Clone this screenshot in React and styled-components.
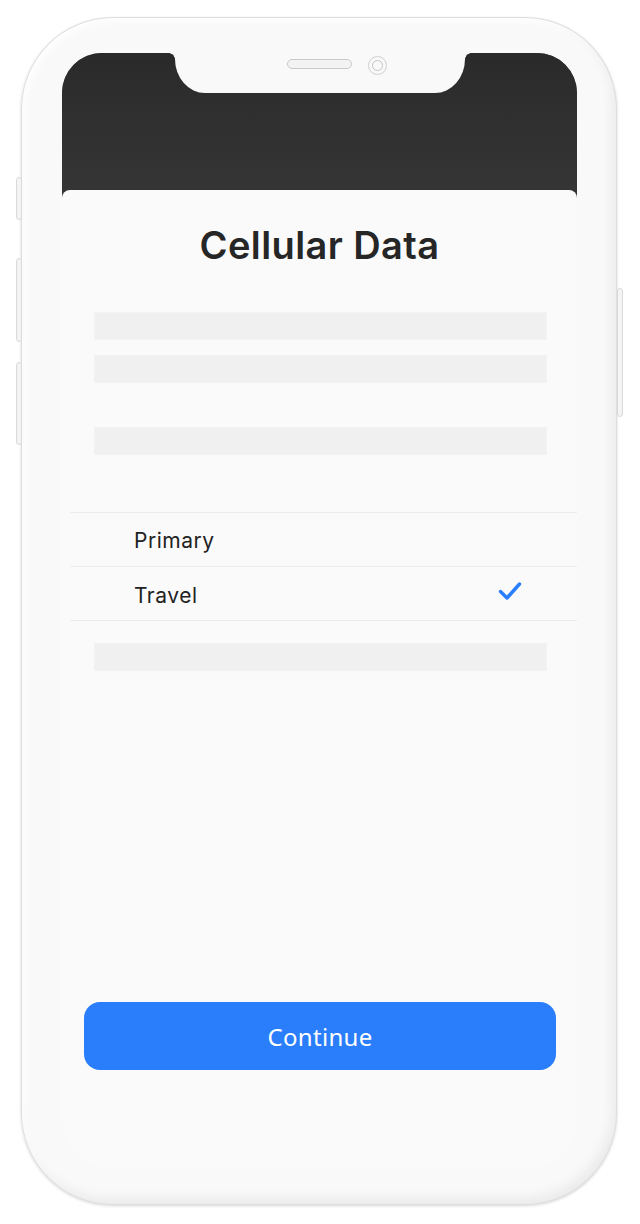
import React from "react";
import styled, { createGlobalStyle } from "styled-components";

const GlobalStyle = createGlobalStyle`
  html, body { margin: 0; padding: 0; background: #ffffff; }
  body { font-family: Inter, "Noto Sans", sans-serif; }
  * { box-sizing: border-box; }
`;

const Stage = styled.div`
  padding: 17px 0 0 21px;
  width: 640px;
  height: 1224px;
`;

const Phone = styled.div`
  position: relative;
  width: 596px;
  height: 1188px;
  border-radius: 92px;
  background: #f9f9f9;
  box-shadow: 0 1px 3px rgba(0, 0, 0, 0.16), inset 0 0 0 1px #dedede,
    inset -5px -7px 12px rgba(0, 0, 0, 0.06), inset 4px 4px 8px rgba(255, 255, 255, 0.9);
  padding: 36px 40px 37px 41px;
  display: flex;
  flex-direction: column;
`;

const SideButton = styled.div`
  position: absolute;
  width: 6px;
  top: ${(p) => p.$top}px;
  height: ${(p) => p.$h}px;
  ${(p) => (p.$right ? "right: -6px;" : "left: -5px;")}
  border: 1px solid #dadada;
  background: #f4f4f4;
  border-radius: 3px;
`;

const Screen = styled.div`
  flex: 1;
  display: flex;
  flex-direction: column;
  border-radius: 40px 40px 52px 52px;
  overflow: hidden;
  background: linear-gradient(#333333 0, #333333 200px, #fafafa 200px);
`;

const Header = styled.div`
  height: 137px;
  flex-shrink: 0;
  background: linear-gradient(#2a2a2a, #353535);
  display: flex;
  justify-content: center;
  align-items: flex-start;
`;

const Notch = styled.div`
  position: relative;
  width: 290px;
  height: 40px;
  background: #f9f9f9;
  border-radius: 0 0 30px 30px / 0 0 34px 34px;
  display: flex;
  justify-content: center;
  align-items: center;
  gap: 16px;
  padding-bottom: 18px;

  &::before,
  &::after {
    content: "";
    position: absolute;
    top: 0;
    width: 6px;
    height: 6px;
  }
  &::before {
    left: -6px;
    background: radial-gradient(circle at 0 100%, transparent 5.5px, #f9f9f9 6px);
  }
  &::after {
    right: -6px;
    background: radial-gradient(circle at 100% 100%, transparent 5.5px, #f9f9f9 6px);
  }
`;

const Spacer = styled.div`
  width: 19px;
`;

const Speaker = styled.div`
  width: 65px;
  height: 10px;
  border-radius: 5px;
  border: 1.5px solid #c9c9c9;
  background: #f3f3f3;
`;

const Camera = styled.div`
  width: 19px;
  height: 19px;
  border-radius: 50%;
  border: 1.5px solid #cfcfcf;
  display: flex;
  align-items: center;
  justify-content: center;
  margin-top: 2px;

  &::after {
    content: "";
    width: 9px;
    height: 9px;
    border-radius: 50%;
    border: 1.5px solid #c4c4c4;
  }
`;

const Card = styled.div`
  flex: 1;
  display: flex;
  flex-direction: column;
  background: #fafafa;
  border-radius: 8px 8px 0 0;
  padding-top: 33px;
`;

const Title = styled.h1`
  margin: 0;
  text-align: center;
  font-family: Inter, "Noto Sans", sans-serif;
  font-size: 38px;
  line-height: 44px;
  font-weight: 600;
  letter-spacing: 0.4px;
  color: #262626;
`;

const Bar = styled.div`
  height: 26px;
  margin: ${(p) => p.$mt}px 31px 0 33px;
  background: #f0f0f0;
  box-shadow: 0 0 0 1px #f3f3f3;
`;

const List = styled.div`
  margin: 58px 0 0 8px;
  border-top: 1px solid #ececec;
`;

const Row = styled.div`
  height: 54px;
  border-bottom: 1px solid #ececec;
  display: flex;
  align-items: center;
  justify-content: space-between;
  padding: ${(p) => (p.$last ? "4px" : "2px")} 55px 0 64px;
`;

const RowLabel = styled.span`
  font-family: Inter, "Noto Sans", sans-serif;
  font-size: 21px;
  font-weight: 400;
  letter-spacing: 0.5px;
  color: #222222;
`;

const Check = styled.svg`
  width: 24px;
  height: 20px;
  margin-top: -9px;
`;

const Button = styled.button`
  margin: auto 21px 98px 22px;
  height: 68px;
  border: none;
  border-radius: 16px;
  background: #2a7efc;
  color: #ffffff;
  font-family: "Noto Sans", "Open Sans", sans-serif;
  font-size: 24px;
  font-weight: 400;
  letter-spacing: 0.3px;
  cursor: pointer;
`;

const options = [
  { label: "Primary", selected: false },
  { label: "Travel", selected: true },
];

export default function App() {
  return (
    <>
      <GlobalStyle />
      <Stage>
        <Phone>
          <SideButton $top={160} $h={43} />
          <SideButton $top={241} $h={84} />
          <SideButton $top={345} $h={83} />
          <SideButton $right $top={271} $h={129} />
          <Screen>
            <Header>
              <Notch>
                <Spacer />
                <Speaker />
                <Camera />
              </Notch>
            </Header>
            <Card>
              <Title>Cellular Data</Title>
              <Bar $mt={46} />
              <Bar $mt={17} />
              <Bar $mt={46} />
              <List>
                {options.map((o, i) => (
                  <Row key={o.label} $last={i === options.length - 1}>
                    <RowLabel>{o.label}</RowLabel>
                    {o.selected && (
                      <Check viewBox="0 0 24 20" fill="none">
                        <path
                          d="M2.5 10.5 L9 17 L21.5 3"
                          stroke="#2a7efc"
                          strokeWidth="3.4"
                          strokeLinecap="round"
                          strokeLinejoin="round"
                        />
                      </Check>
                    )}
                  </Row>
                ))}
              </List>
              <Bar $mt={23} />
              <Button>Continue</Button>
            </Card>
          </Screen>
        </Phone>
      </Stage>
    </>
  );
}
